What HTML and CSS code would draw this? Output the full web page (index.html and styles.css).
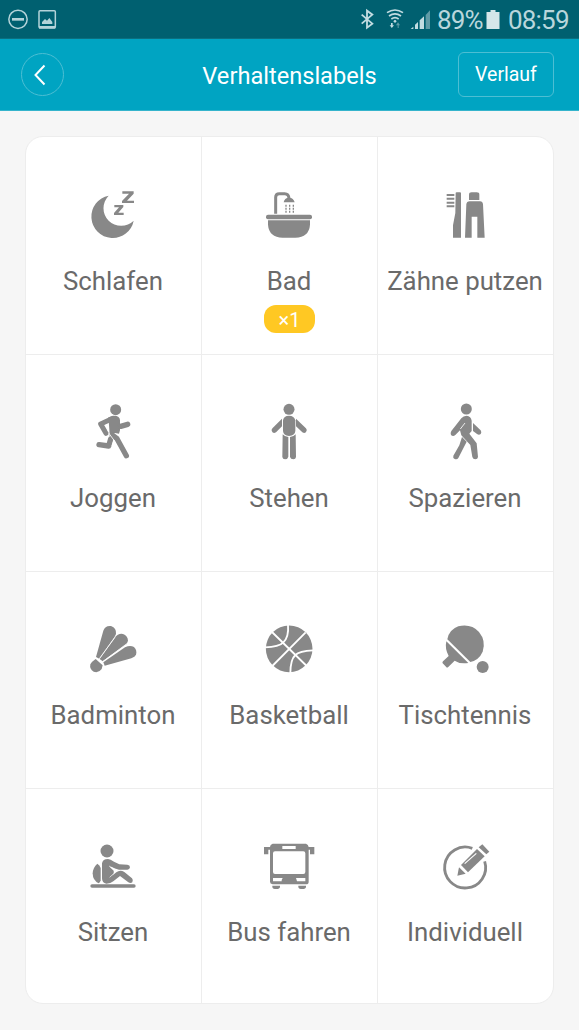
FILE: index.html
```html
<!DOCTYPE html>
<html lang="de">
<head>
<meta charset="utf-8">
<title>Verhaltenslabels</title>
<link rel="stylesheet" href="styles.css">
</head>
<body>
<div class="status">
  <svg class="status-left" width="60" height="38" viewBox="0 0 180 114">
    <g fill="none" stroke="#b4d3d9" stroke-width="4.500">
      <circle cx="54" cy="58" r="27.500"/>
      <path d="M36 58H72" stroke-width="8"/>
      <rect x="117" y="32" width="49" height="51" rx="3"/>
      <path d="M117 82H166" stroke-width="8"/>
    </g>
    <path fill="#b4d3d9" d="M126 72V66L135 57L141 62L148 54L157 66V72Z"/>
  </svg>
  <div class="status-right">
    <svg width="80" height="38" viewBox="50 0 240 114">
      <path d="M64 44L96 71L80 83V32L96 44L64 71" fill="none" stroke="#c2dce1" stroke-width="5.500"/>
      <g fill="none" stroke="#c2dce1" stroke-width="5">
        <path d="M140 38Q164 22 188 38M146 48Q164 35 182 48M153 57Q164 49 175 57"/>
      </g>
      <circle cx="164" cy="64" r="4" fill="#c2dce1"/>
      <path d="M152 69H157V76H161L154.500 84L148 76H152Z" fill="#c2dce1"/>
      <path d="M172 84V76H167L173 67L179 76H175V84Z" fill="#5f9ba6"/>
      <path d="M211 87L219 80V87ZM224 87V74L233 66V87ZM238 87V61L251 49V87Z" fill="#c2dce1"/>
      <path d="M256 87V45L269 31V87Z" fill="#5f9ba6"/>
    </svg>
    <span class="battery-text">89%</span>
    <svg class="battery" width="14" height="38" viewBox="0 0 14 38"><path d="M4.500 10H9.500V12H13.500V29H0.500V12H4.500Z" fill="#d5e6ea"/></svg>
    <span class="clock">08:59</span>
  </div>
</div>
<header class="header">
  <button class="back" aria-label="Zurück"><svg width="42" height="42" viewBox="0 0 42 42"><path d="M23.500 11.500L14.500 21L23.500 30.500" fill="none" stroke="#fff" stroke-width="2"/></svg></button>
  <h1 class="title">Verhaltenslabels</h1>
  <button class="history">Verlauf</button>
</header>
<main class="card">
  <div class="cell">
    <svg class="icon" viewBox="69 9 183 192">
      <path d="M146 47A64 64 0 1 0 221 122A53 53 0 0 1 146 47Z"/>
      <path d="M187 34H221V41L201 62H222V69H186V63L207 41H187ZM163 75H190V81L175 98H191V105H162V99L177 82H163Z"/>
    </svg>
    <span class="label">Schlafen</span>
  </div>
  <div class="cell">
    <svg class="icon" viewBox="57 9 183 192">
      <path d="M107 101V52Q107 41 118 41H134Q146 41 147 55" class="line" stroke-width="9"/>
      <path d="M131 67Q133 53 147 53Q161 53 164 67Z"/>
      <path d="M138 74V101M149 74V101M160 74V101" class="line" stroke-width="4" stroke-dasharray="6 3"/>
      <rect x="78" y="104" width="138" height="14" rx="6"/>
      <path d="M84 121H210V134Q207 172 166 173H128Q87 172 84 134Z"/>
    </svg>
    <span class="label">Bad</span>
    <span class="badge">×1</span>
  </div>
  <div class="cell">
    <svg class="icon" viewBox="165 9 183 192">
      <path d="M200 45H223M200 56H223M200 68H223M200 79H223" class="line" stroke-width="6"/>
      <path d="M227 39Q227 37 230 37H240Q243 37 243 40V173H219V136L226 99Z"/>
      <path d="M267 60V44Q267 37 275 37H290Q298 37 298 44V60Z"/>
      <path d="M259 73Q260 64 269 64H300Q308 64 309 73L314 173H292V110H275V173H255Z"/>
    </svg>
    <span class="label">Zähne putzen</span>
  </div>
  <div class="cell">
    <svg class="icon" viewBox="69 15 183 192">
      <circle cx="167" cy="44" r="16.500"/>
      <path d="M159 70L122 87L138 115" class="limb" stroke-width="15"/>
      <path d="M145 67L162 62Q180 62 180 76V106L177 116L165 114L149 119L147 90Z"/>
      <path d="M182 94L203 88" class="limb" stroke-width="16"/>
      <path d="M157 120L171 131L199 182" class="limb" stroke-width="16"/>
      <path d="M152 132L146 153L117 149" class="limb" stroke-width="16"/>
      <path d="M139 88L145 110M146 114L162 136L156 152" class="cut" stroke-width="2.500"/>
    </svg>
    <span class="label">Joggen</span>
  </div>
  <div class="cell">
    <svg class="icon" viewBox="57 15 183 192">
      <circle cx="147" cy="43" r="16.500"/>
      <path d="M129 76Q131 62 147 62Q163 62 166 76V108Q165 122 147 123Q130 122 129 108Z"/>
      <path d="M126 71V94L108 112Q99 118 95 107Q94 103 98 99ZM168 71V94L187 112Q196 118 200 107Q201 103 197 99Z"/>
      <path d="M128 118Q135 126 145 126V185Q143 193 135 193Q128 193 127 186ZM150 126Q160 126 167 118L168 186Q167 193 160 193Q152 193 150 186Z"/>
    </svg>
    <span class="label">Stehen</span>
  </div>
  <div class="cell">
    <svg class="icon" viewBox="105 15 183 192">
      <circle cx="199" cy="42" r="16.500"/>
      <path d="M184 70Q190 62 200 62Q213 63 215 77V108L208 116L230 145L234 186Q233 193 226 193Q219 193 217 186L211 150L184 121L180 106L166 120Q159 126 153 120Q150 115 154 108Z"/>
      <path d="M219 84L242 106Q246 112 242 117Q237 121 231 117L219 108Z"/>
      <path d="M186 126L200 140L190 160L175 189Q171 195 164 192Q158 189 160 182L178 151Z"/>
      <path d="M195 84L181 102" class="cut" stroke-width="2.500"/>
    </svg>
    <span class="label">Spazieren</span>
  </div>
  <div class="cell">
    <svg class="icon" viewBox="129 21 183 192">
      <path d="M168 141L190 62Q195 46 213 48Q230 54 228 72L223 82L178 146Z"/>
      <path d="M179 147L224 83Q235 69 249 72Q263 77 264 92L260 102L188 154Z"/>
      <path d="M190 157L255 112Q270 104 282 111Q292 121 288 134Q285 140 274 145L194 167Z"/>
      <path d="M167 147L188 166L185 177Q176 190 161 185Q148 178 151 163Q155 155 167 147Z"/>
      <path d="M178 146L225 82M188 155L262 100" class="cut" stroke-width="2.500"/>
    </svg>
    <span class="label">Badminton</span>
  </div>
  <div class="cell">
    <svg class="icon" viewBox="117 21 183 192">
      <circle cx="207.500" cy="116.500" r="70"/>
      <path d="M156 66L260 168M257 67L157 168M204 44Q207 82 190 97Q177 111 135 112M279 121Q238 123 226 135Q211 149 211 190" class="cut" stroke-width="5.500"/>
    </svg>
    <span class="label">Basketball</span>
  </div>
  <div class="cell">
    <svg class="icon" viewBox="135 21 183 192">
      <path d="M172 88Q177 59 205 49Q243 40 267 66Q289 93 278 125Q267 150 241 156Z"/>
      <path d="M169 94L235 159Q210 163 194 152L174 172Q171 174 168 170L158 160Q156 157 159 154L176 138Q164 116 169 94Z"/>
      <circle cx="278" cy="171" r="18"/>
    </svg>
    <span class="label">Tischtennis</span>
  </div>
  <div class="cell">
    <svg class="icon" viewBox="69 12 183 192">
      <circle cx="141" cy="63" r="19.500"/>
      <path d="M112 101Q119 105 122 114V151Q120 158 116 160Q98 151 98 130Q99 112 112 101Z"/>
      <path d="M126 100Q128 87 144 87Q151 87 162 95L178 103L202 104Q210 105 210 112Q209 119 202 119L177 119Q165 116 153 110L150 112L161 122L162 130L156 137L169 127Q180 118 193 126L216 145Q221 151 217 157Q212 161 205 157L180 138L160 154Q152 161 139 161Q126 160 126 145Z"/>
      <path d="M147 108Q157 114 164 117M149 142L162 130L164 122" class="cut" stroke-width="2"/>
      <path d="M96 168H222" class="limb" stroke-width="10"/>
    </svg>
    <span class="label">Sitzen</span>
  </div>
  <div class="cell">
    <svg class="icon" viewBox="597 12 183 192">
      <path fill-rule="evenodd" d="M638 41H738Q745 43 746 51H763V73H750V59H746V155Q746 163 738 163H638Q630 162 630 155V59H625V73H612V51H630Q630 43 638 41ZM667 48V57H707V48ZM645 64Q639 64 639 70V126Q639 132 645 132H730Q736 132 736 126V70Q736 64 730 64ZM639 144V154H665V150L668 144ZM708 144L711 154H736V144Z"/>
      <path d="M637 167H660V172Q658 177 653 177H644Q638 177 637 172ZM715 167H738V172Q736 177 731 177H722Q716 177 715 172Z"/>
    </svg>
    <span class="label">Bus fahren</span>
  </div>
  <div class="cell">
    <svg class="icon" viewBox="1125 12 183 192">
      <path d="M1237 55A61.500 61.500 0 1 0 1274 94" class="line" stroke-width="8.500"/>
      <path d="M1203 105L1251 57L1274 79L1224 127Z"/>
      <path d="M1256 52L1267 43L1288 65L1279 73Z"/>
      <path d="M1197 112L1217 131L1192 137Z"/>
      <path d="M1214 101L1249 70" class="cut" stroke-width="3.500"/>
    </svg>
    <span class="label">Individuell</span>
  </div>
</main>
</body>
</html>
```
FILE: styles.css
```css
* { box-sizing: border-box; }
body {
  margin: 0;
  height: 1030px;
  background: #f6f6f6;
  font-family: Roboto, "Liberation Sans", sans-serif;
  overflow: hidden;
}
.status {
  display: flex;
  justify-content: space-between;
  height: 39px;
  background: #006070;
  border-bottom: 1px solid #0b6f80;
  color: #b9d6dc;
}
.status-right { display: flex; padding-right: 11px; }
.battery-text, .clock { font-size: 26px; line-height: 41px; }
.battery-text { width: 46px; letter-spacing: -0.9px; }
.battery { margin: 0 8px 0 3px; }
.clock { width: 60px; letter-spacing: -0.8px; }
.header {
  display: grid;
  grid-template-columns: 96px 1fr 96px;
  align-items: center;
  height: 72px;
  padding: 0 25px 0 21px;
  background: #00a4c2;
  border-bottom: 1px solid #35b4cc;
  color: #fff;
}
.back, .history {
  padding: 0;
  background: none;
  border: 1px solid #4dbed3;
  color: #fff;
  font-family: inherit;
}
.back { width: 43px; height: 43px; border-radius: 50%; }
.back svg { display: block; margin-left: -1px; }
.title {
  margin: 2px 0 0 4px;
  text-align: center;
  font-size: 23.6px;
  font-weight: 400;
  white-space: nowrap;
}
.history { height: 45px; border-radius: 6px; font-size: 19.5px; }
.card {
  display: grid;
  grid-template-columns: 175px 176px 176px;
  grid-template-rows: 217px 217px 217px 215px;
  width: 529px;
  margin: 25px 0 0 25px;
  background: #fff;
  border: 1px solid #ededed;
  border-radius: 18px;
  overflow: hidden;
}
.cell {
  display: flex;
  flex-direction: column;
  align-items: center;
  padding-top: 45px;
  border-top: 1px solid #ededed;
  border-left: 1px solid #ededed;
}
.cell:nth-child(-n+3) { border-top: 0; padding-top: 46px; }
.cell:nth-child(3n+1) { border-left: 0; }
.icon { display: block; width: 61px; height: 64px; fill: #888; }
.line, .limb { fill: none; stroke: #888; }
.limb { stroke-linecap: round; stroke-linejoin: round; }
.cut { fill: none; stroke: #fff; }
.label {
  margin: 18px 1px 0 0;
  font-size: 25.8px;
  line-height: 32px;
  color: #6a6a6a;
  white-space: nowrap;
}
.badge {
  width: 51px;
  height: 28px;
  margin-top: 8px;
  border-radius: 12px;
  background: #ffc823;
  color: #fff;
  font-size: 20px;
  line-height: 30px;
  text-align: center;
}
```
